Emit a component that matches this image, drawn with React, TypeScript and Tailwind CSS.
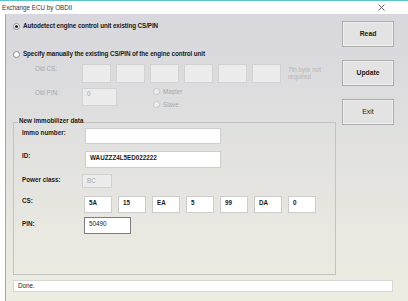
import React from "react";

const font = "font-['Liberation_Sans',Arial,sans-serif]";

function Radio({ on, off }: { on?: boolean; off?: boolean }) {
  return (
    <span
      className={`flex h-[7px] w-[7px] shrink-0 items-center justify-center rounded-full border ${
        off ? "border-[#c6c6c6] bg-[#eeeeee]" : "border-[#8c8c8c] bg-white"
      }`}
    >
      {on && <span className="h-[3px] w-[3px] rounded-full bg-[#222]" />}
    </span>
  );
}

type Tone = "on" | "off" | "focus";

function Field({ className = "", value = "", tone = "on" }: { className?: string; value?: string; tone?: Tone }) {
  const look =
    tone === "off"
      ? "border-[#d2d2d2] bg-[#ececec] text-[#a6a6a6]"
      : tone === "focus"
      ? "border-[#7d7d7d] bg-white text-[#1a1a1a]"
      : "border-[#cdcdcd] bg-white text-[#1a1a1a]";
  return (
    <div className={`shrink-0 border pl-[4px] pt-[1px] leading-[8px] ${look} ${className}`}>{value}</div>
  );
}

function Btn({ label, bold = true }: { label: string; bold?: boolean }) {
  return (
    <div
      className={`flex h-[26px] items-center justify-center border border-[#adadad] bg-[#e3e3e3] text-[6.8px] shadow-[inset_0_0_0_1px_#efefef] ${
        bold ? "font-bold" : ""
      }`}
    >
      {label}
    </div>
  );
}

const oldCs = ["", "", "", "", "", ""];
const newCs = ["5A", "15", "EA", "5", "99", "DA", "0"];

export default function App() {
  return (
    <div className={`${font} flex h-[301px] w-[408px] flex-col overflow-hidden bg-white text-[6.3px] text-[#1a1a1a]`}>
      {/* title bar */}
      <div className="flex h-[14px] shrink-0 items-center justify-between border-t border-[#5cc4cb] pl-[2px] pr-[23px]">
        <span className="text-[#333]">Exchange ECU by OBDII</span>
        <svg width="7" height="7" viewBox="0 0 7 7">
          <path d="M0.5 0.5L6.5 6.5M6.5 0.5L0.5 6.5" stroke="#444" strokeWidth="0.8" />
        </svg>
      </div>

      {/* client area */}
      <div className="ml-[5px] flex flex-1 flex-col border-l border-[#5cc4cb] bg-gradient-to-b from-[#d7d7dd] to-[#eeede2]">
        <div className="flex">
          <div className="flex flex-1 flex-col">
            <div className="mt-[7px] flex h-[10px] items-center gap-[3px] pl-[7px] font-bold tracking-[-0.1px]">
              <Radio on />
              <span>Autodetect engine control unit existing CS/PIN</span>
            </div>
            <div className="mt-[18px] flex h-[10px] items-center gap-[3px] pl-[7px] font-bold tracking-[-0.1px]">
              <Radio />
              <span>Specify manually the existing CS/PIN of the engine control unit</span>
            </div>

            {/* old CS */}
            <div className="mt-[5px] flex h-[19px] items-start pl-[29px] text-[#a8a8a8]">
              <span className="w-[47px] pt-[1px] leading-[8px]">Old CS:</span>
              <div className="flex gap-[5px]">
                {oldCs.map((v, i) => (
                  <Field key={i} tone="off" value={v} className="h-[19px] w-[29px]" />
                ))}
              </div>
              <span className="ml-[7px] pt-[2px] leading-[7px] text-[#b6b6b6]">
                7th byte not
                <br />
                required
              </span>
            </div>

            {/* old PIN */}
            <div className="mt-[5px] flex h-[18px] items-start pl-[29px] text-[#a8a8a8]">
              <span className="w-[47px] pt-[1px] leading-[8px]">Old PIN:</span>
              <Field tone="off" value="0" className="h-[18px] w-[35px]" />
              <div className="-mt-[1px] ml-[36px] flex flex-col gap-[4px]">
                <div className="flex h-[9px] items-center gap-[3px]">
                  <Radio off />
                  <span>Master</span>
                </div>
                <div className="flex h-[9px] items-center gap-[3px]">
                  <Radio off />
                  <span>Slave</span>
                </div>
              </div>
            </div>

            {/* group box */}
            <div className="ml-[7px] mt-[11px] flex w-[323px] flex-col">
              <div className="flex h-[10px]">
                <div className="h-[5px] w-[5px] self-end border-l border-t border-[#c3c3c3]" />
                <span className="px-[1px] font-bold leading-[7px]">New immobilizer data</span>
                <div className="h-[5px] flex-1 self-end border-r border-t border-[#c3c3c3]" />
              </div>
              <div className="flex h-[148px] flex-col border-x border-b border-[#c3c3c3] pl-[8px]">
                <div className="mt-[1px] flex h-[16px] items-start font-bold">
                  <span className="w-[63px] pt-[1px] leading-[8px]">Immo number:</span>
                  <Field className="h-[16px] w-[136px]" />
                </div>
                <div className="mt-[7px] flex h-[17px] items-start font-bold">
                  <span className="w-[63px] pt-[1px] leading-[8px]">ID:</span>
                  <Field value="WAUZZZ4L5ED022222" className="h-[17px] w-[136px] pt-[2px]" />
                </div>
                <div className="mt-[6px] flex h-[14px] items-start font-bold">
                  <span className="w-[60px] pt-[2px] leading-[8px]">Power class:</span>
                  <Field tone="off" value="BC" className="h-[14px] w-[30px] pt-[2px] font-normal" />
                </div>
                <div className="mt-[8px] flex h-[17px] items-start font-bold">
                  <span className="w-[62px] pt-[1px] leading-[8px]">CS:</span>
                  <div className="flex gap-[6px]">
                    {newCs.map((v) => (
                      <Field key={v} value={v} className="h-[17px] w-[28px] pt-[2px]" />
                    ))}
                  </div>
                </div>
                <div className="mt-[4px] flex h-[17px] items-start font-bold">
                  <span className="w-[62px] pt-[3px] leading-[8px]">PIN:</span>
                  <Field tone="focus" value="50490" className="h-[17px] w-[47px] pt-[2px] font-normal" />
                </div>
              </div>
            </div>
          </div>

          {/* buttons */}
          <div className="mr-[14px] flex w-[52px] flex-col">
            <div className="mt-[7px]">
              <Btn label="Read" />
            </div>
            <div className="mt-[13px]">
              <Btn label="Update" />
            </div>
            <div className="mt-[13px]">
              <Btn label="Exit" bold={false} />
            </div>
          </div>
        </div>

        {/* status bar */}
        <div className="ml-[7px] mt-[5px] flex h-[12px] w-[380px] items-center border border-[#d6d6d6] bg-white pl-[4px]">
          Done.
        </div>
      </div>
    </div>
  );
}
